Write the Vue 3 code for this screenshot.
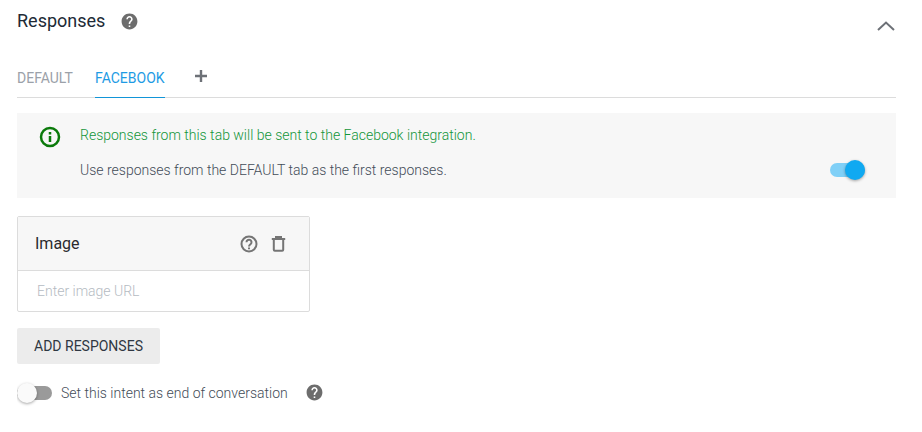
<script setup>
const helpPath = 'M12 2C6.48 2 2 6.48 2 12s4.48 10 10 10 10-4.48 10-10S17.52 2 12 2zm1 17h-2v-2h2v2zm2.07-7.75l-.9.92C13.45 12.9 13 13.5 13 15h-2v-.5c0-1.1.45-2.1 1.17-2.83l1.24-1.26c.37-.36.59-.86.59-1.41 0-1.1-.9-2-2-2s-2 .9-2 2H8c0-2.21 1.79-4 4-4s4 1.79 4 4c0 .88-.36 1.68-.93 2.25z'
</script>

<template>
  <div class="page">
    <div class="header">
      <span class="title">Responses</span>
      <svg class="help title-help" viewBox="0 0 24 24" width="19" height="19"><path :d="helpPath" /></svg>
      <svg class="chevron" viewBox="0 0 18 10" width="18" height="10"><path d="M1 9 L9 1.5 L17 9" /></svg>
    </div>

    <div class="tabs">
      <span class="tab">DEFAULT</span>
      <span class="tab active">FACEBOOK</span>
      <svg class="plus" viewBox="0 0 14 14" width="14" height="14"><path d="M5.8 1h2.400v4.800H13v2.400H8.200V13H5.800V8.200H1V5.800h4.800z" /></svg>
    </div>

    <div class="notice">
      <svg class="info" viewBox="0 0 22 22" width="22" height="22">
        <circle cx="11" cy="11" r="9" />
        <path d="M11 10v6M11 6v2.500" />
      </svg>
      <div class="notice-body">
        <div class="notice-green">Responses from this tab will be sent to the Facebook integration.</div>
        <div class="notice-row">
          <span>Use responses from the DEFAULT tab as the first responses.</span>
          <span class="switch on"><span class="knob"></span></span>
        </div>
      </div>
    </div>

    <div class="card">
      <div class="card-head">
        <span class="card-title">Image</span>
        <svg class="q-icon" viewBox="0 0 18 18" width="18" height="18">
          <circle cx="9" cy="9" r="7.500" />
          <path d="M6.500 7.200a2.500 2.500 0 1 1 4.200 1.800c-1 .8-1.700 1.200-1.700 2.500" />
          <path d="M9 12.400v1.800" />
        </svg>
        <svg class="trash" viewBox="0 0 15 16" width="15" height="16">
          <path d="M2.800 3v10.800a1 1 0 0 0 1 1h7.400a1 1 0 0 0 1-1V3M.8 3h13.400M5 3V1h5v2" />
        </svg>
      </div>
      <div class="card-input">Enter image URL</div>
    </div>

    <button class="add-btn">ADD RESPONSES</button>

    <div class="end-row">
      <span class="switch off"><span class="knob"></span></span>
      <span class="end-label">Set this intent as end of conversation</span>
      <svg class="help end-help" viewBox="0 0 24 24" width="19" height="19"><path :d="helpPath" /></svg>
    </div>
  </div>
</template>

<style>
body {
  background: #fff;
}
</style>

<style scoped>
.page {
  width: 879px;
  height: 432px;
  box-sizing: border-box;
  margin-left: 17px;
  overflow: hidden;
  font-family: Roboto, "Liberation Sans", sans-serif;
  font-size: 14px;
  font-weight: 300;
  color: #434c57;
}
.header {
  display: flex;
  align-items: center;
  height: 41px;
}
.title {
  font-size: 18px;
  font-weight: 400;
  color: #202a36;
}
.help {
  fill: #6d6d6d;
}
.title-help {
  margin-left: 15px;
  margin-top: 1px;
}
.chevron {
  margin-left: auto;
  margin-top: 11px;
  margin-right: 1px;
  fill: none;
  stroke: #6d7177;
  stroke-width: 2;
}
.tabs {
  display: flex;
  align-items: flex-end;
  height: 56px;
  margin-bottom: 15px;
  border-bottom: 1px solid #dcdcdc;
}
.tab {
  height: 100%;
  box-sizing: border-box;
  padding-top: 27px;
  line-height: 20px;
  font-weight: 400;
  color: #9ba1a9;
  margin-right: 22px;
}
.tab.active {
  width: 70px;
  text-align: center;
  color: #1e9be4;
  border-bottom: 1px solid #1295d8;
  margin-bottom: -1px;
  height: 57px;
  margin-right: 29px;
}
.plus {
  fill: #6d7177;
  margin-bottom: 14px;
}
.notice {
  display: flex;
  height: 85px;
  background: #f7f7f7;
  box-sizing: border-box;
  padding: 12px 31px 0 22px;
}
.info {
  flex: none;
  margin-top: 1px;
  fill: none;
  stroke: #0b7a0b;
  stroke-width: 2.500;
}
.notice-body {
  flex: 1;
  margin-left: 19px;
}
.notice-green {
  color: #129539;
  line-height: 20px;
}
.notice-row {
  display: flex;
  justify-content: space-between;
  align-items: center;
  margin-top: 15px;
  line-height: 20px;
}
.switch {
  position: relative;
  display: block;
  width: 35px;
  height: 14px;
  border-radius: 7px;
}
.switch .knob {
  position: absolute;
  top: -3px;
  width: 20px;
  height: 20px;
  border-radius: 50%;
  box-shadow: 0 1px 3px rgba(0, 0, 0, 0.35);
}
.switch.on {
  background: #80d0f7;
}
.switch.on .knob {
  right: 0;
  background: #10a9f1;
}
.switch.off {
  background: #9a9a9a;
}
.switch.off .knob {
  left: 0;
  background: #fafafa;
}
.card {
  width: 293px;
  height: 96px;
  margin-top: 18px;
  box-sizing: border-box;
  border: 1px solid #dcdcdc;
  border-radius: 2px;
}
.card-head {
  display: flex;
  align-items: center;
  height: 54px;
  box-sizing: border-box;
  background: #f7f7f7;
  border-bottom: 1px solid #dcdcdc;
  padding: 0 23px 0 17px;
}
.card-title {
  flex: 1;
  font-size: 16px;
  font-weight: 400;
  color: #2a2a2e;
}
.q-icon,
.trash {
  fill: none;
  stroke: #757575;
  stroke-width: 2;
}
.q-icon {
  margin-right: 13px;
}
.card-input {
  padding: 11px 19px;
  line-height: 18px;
  color: #b5bbc2;
}
.add-btn {
  display: block;
  width: 143px;
  height: 36px;
  margin-top: 16px;
  border: none;
  border-radius: 2px;
  background: #ececec;
  font-family: inherit;
  font-size: 14px;
  font-weight: 400;
  color: #2f3742;
  padding: 0;
}
.end-row {
  display: flex;
  align-items: center;
  height: 24px;
  margin-top: 17px;
}
.end-label {
  margin-left: 9px;
}
.end-help {
  margin-left: 17px;
  margin-top: -2px;
}
</style>
